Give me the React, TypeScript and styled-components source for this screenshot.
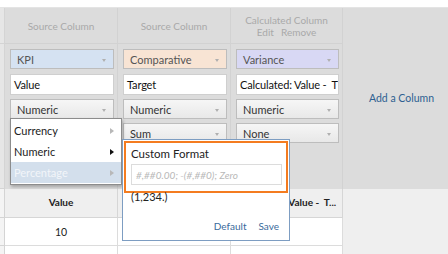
import * as React from "react";
import styled, { createGlobalStyle } from "styled-components";

const GlobalStyle = createGlobalStyle`
  html, body {
    margin: 0;
    padding: 0;
    background: #ffffff;
    font-family: Lato, "Open Sans", sans-serif;
    font-size: 11px;
    color: #222;
  }
`;

const Page = styled.div`
  width: 448px;
  height: 254px;
  overflow: hidden;
  position: relative;
  padding-top: 7px;
  box-sizing: border-box;
`;

const Grid = styled.div`
  display: grid;
  grid-template-columns: 5px 113px 113px 112px 1fr;
  grid-template-rows: 36px 145px 29px 28px 20px;
  border-top: 1px solid #e4e4e4;
`;

const Gutter = styled.div<{ $light?: boolean }>`
  background: ${(p) => (p.$light ? "#f4f4f4" : "#e6e6e6")};
  border-right: 1px solid #d4d4d4;
  border-bottom: 1px solid #d4d4d4;
  box-sizing: border-box;
`;

const HeaderCell = styled.div`
  background: #dcdcdc;
  border-right: 1px solid #d2d2d2;
  border-bottom: 1px solid #d2d2d2;
  box-sizing: border-box;
  display: flex;
  flex-direction: column;
  align-items: center;
  justify-content: center;
  color: #a9a9a9;
  font-size: 10px;
  line-height: 12px;
`;

const HeaderActions = styled.div`
  display: flex;
  gap: 7px;
`;

const AddArea = styled.div`
  grid-row: 1 / span 2;
  grid-column: 5;
  background: #dcdcdc;
  display: flex;
  align-items: center;
  justify-content: center;
  padding: 0 0 2px 12px;
  color: #2d5f91;
  font-size: 10.5px;
`;

const ConfigCell = styled.div`
  background: #dcdcdc;
  border-right: 1px solid #d2d2d2;
  box-sizing: border-box;
  padding: 5px 3px 0 5px;
  display: flex;
  flex-direction: column;
  gap: 4px;
`;

const Select = styled.div<{ $tone?: string }>`
  height: 20px;
  box-sizing: border-box;
  border: 1px solid #bdbdbd;
  background: ${(p) => p.$tone || "linear-gradient(#f6f6f6, #e8e8e8)"};
  display: flex;
  align-items: center;
  justify-content: space-between;
  padding: 0 7px 0 6px;
  font-size: 11px;
  color: ${(p) => (p.$tone ? "#555" : "#333")};
`;

const Caret = styled.span`
  width: 0;
  height: 0;
  border-left: 2.5px solid transparent;
  border-right: 2.5px solid transparent;
  border-top: 3px solid #b0b0b0;
  margin-top: 2px;
`;

const TextBox = styled.div`
  height: 21px;
  margin-top: 1px;
  box-sizing: border-box;
  border: 1px solid #cfcfcf;
  background: #fff;
  display: flex;
  align-items: center;
  padding: 0 3px;
  white-space: nowrap;
  overflow: hidden;
  color: #111;
  font-size: 11px;
  letter-spacing: -0.15px;
`;

const TableHead = styled.div<{ $empty?: boolean }>`
  background: #efefef;
  border-right: ${(p) => (p.$empty ? "none" : "1px solid #d6d6d6")};
  border-bottom: ${(p) => (p.$empty ? "none" : "1px solid #d6d6d6")};
  box-sizing: border-box;
  display: flex;
  align-items: center;
  justify-content: center;
  padding-bottom: 2px;
  font-weight: 700;
  font-size: 10px;
  color: #222;
  white-space: nowrap;
  overflow: hidden;
`;

const DataCell = styled.div<{ $empty?: boolean }>`
  background: ${(p) => (p.$empty ? "#efefef" : "#fff")};
  border-right: ${(p) => (p.$empty ? "none" : "1px solid #dcdcdc")};
  border-bottom: ${(p) => (p.$empty ? "none" : "1px solid #dcdcdc")};
  box-sizing: border-box;
  display: flex;
  align-items: center;
  justify-content: center;
  font-size: 10.5px;
  color: #222;
`;

const Menu = styled.div`
  position: absolute;
  left: 10px;
  top: 118px;
  width: 112px;
  height: 67px;
  box-sizing: border-box;
  background: #fff;
  border: 1px solid #8c8c8c;
  box-shadow: 1px 2px 3px rgba(0, 0, 0, 0.25);
  padding: 1px 0;
  display: flex;
  flex-direction: column;
`;

const MenuItem = styled.div<{ $active?: boolean }>`
  height: 21px;
  display: flex;
  align-items: center;
  justify-content: space-between;
  padding: 0 7px 0 3px;
  font-size: 11px;
  background: ${(p) => (p.$active ? "#d3dfec" : "transparent")};
  color: ${(p) => (p.$active ? "#f2f5f9" : "#222")};
`;

const Arrow = styled.span<{ $dark?: boolean }>`
  width: 0;
  height: 0;
  border-top: 3px solid transparent;
  border-bottom: 3px solid transparent;
  border-left: 4px solid ${(p) => (p.$dark ? "#111" : "#b8b8b8")};
`;

const Popup = styled.div`
  position: absolute;
  left: 122px;
  top: 139px;
  width: 168px;
  height: 102px;
  box-sizing: border-box;
  background: #fff;
  border: 1px solid #7d9dc2;
  padding: 1px;
  display: flex;
  flex-direction: column;
`;

const Highlight = styled.div`
  border: 2px solid #f47c20;
  height: 52px;
  box-sizing: border-box;
  padding: 4px 4px 0 5px;
  display: flex;
  flex-direction: column;
  gap: 3px;
`;

const FormatLabel = styled.div`
  font-size: 11.5px;
  color: #222;
  line-height: 14px;
`;

const FormatInput = styled.div`
  height: 21px;
  box-sizing: border-box;
  border: 1px solid #dcdcdc;
  display: flex;
  align-items: center;
  padding: 0 4px;
  font-style: italic;
  color: #b8b8b8;
  font-size: 10px;
  white-space: nowrap;
  overflow: hidden;
`;

const Sample = styled.div`
  padding: 0 0 0 7px;
  font-size: 11px;
  color: #222;
  line-height: 11px;
  margin-top: -2px;
`;

const Actions = styled.div`
  margin-top: auto;
  display: flex;
  justify-content: flex-end;
  gap: 12px;
  padding: 0 9px 7px 0;
  color: #3a6a9c;
  font-size: 10px;
`;

export default function App() {
  return (
    <>
      <GlobalStyle />
      <Page>
        <Grid>
          <Gutter />
          <HeaderCell>Source Column</HeaderCell>
          <HeaderCell>Source Column</HeaderCell>
          <HeaderCell>
            <div>Calculated Column</div>
            <HeaderActions>
              <span>Edit</span>
              <span>Remove</span>
            </HeaderActions>
          </HeaderCell>
          <AddArea>Add a Column</AddArea>

          <Gutter />
          <ConfigCell>
            <Select $tone="#d5e2f2">KPI<Caret /></Select>
            <TextBox>Value</TextBox>
            <Select>Numeric<Caret /></Select>
            <Select>Sum<Caret /></Select>
          </ConfigCell>
          <ConfigCell>
            <Select $tone="#f8e4d4">Comparative<Caret /></Select>
            <TextBox>Target</TextBox>
            <Select>Numeric<Caret /></Select>
            <Select>Sum<Caret /></Select>
          </ConfigCell>
          <ConfigCell>
            <Select $tone="#d8d8f4">Variance<Caret /></Select>
            <TextBox>Calculated: Value -&nbsp; T</TextBox>
            <Select>Numeric<Caret /></Select>
            <Select>None<Caret /></Select>
          </ConfigCell>

          <Gutter $light />
          <TableHead>Value</TableHead>
          <TableHead>Target</TableHead>
          <TableHead>Calculated: Value -&nbsp; T...</TableHead>
          <TableHead $empty />

          <Gutter $light />
          <DataCell>10</DataCell>
          <DataCell>8</DataCell>
          <DataCell>2</DataCell>
          <DataCell $empty />

          <Gutter $light />
          <DataCell />
          <DataCell />
          <DataCell />
          <DataCell $empty />
        </Grid>

        <Menu>
          <MenuItem>Currency<Arrow /></MenuItem>
          <MenuItem>Numeric<Arrow $dark /></MenuItem>
          <MenuItem $active>Percentage<Arrow /></MenuItem>
        </Menu>

        <Popup>
          <Highlight>
            <FormatLabel>Custom Format</FormatLabel>
            <FormatInput>#,##0.00; -(#,##0); Zero</FormatInput>
          </Highlight>
          <Sample>(1,234.)</Sample>
          <Actions>
            <span>Default</span>
            <span>Save</span>
          </Actions>
        </Popup>
      </Page>
    </>
  );
}
